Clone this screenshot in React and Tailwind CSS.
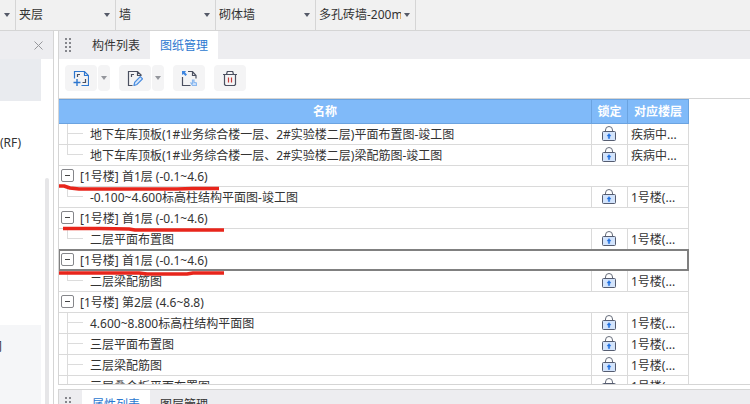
const FONT = "font-['Noto_Sans','Noto_Sans_CJK_SC',sans-serif]";

const rows = [
  { name: "地下车库顶板(1#业务综合楼一层、2#实验楼二层)平面布置图-竣工图", floor: "疾病中..." },
  { name: "地下车库顶板(1#业务综合楼一层、2#实验楼二层)梁配筋图-竣工图", floor: "疾病中...", last: true },
  { name: "[1号楼] 首1层 (-0.1~4.6)", group: true, mark: "M0 8H5L11 10L20 11H118L134 10.500H160" },
  { name: "-0.100~4.600标高柱结构平面图-竣工图", floor: "1号楼(...", last: true },
  { name: "[1号楼] 首1层 (-0.1~4.6)", group: true, mark: "M4 8.500H40L70 9L76 10H165" },
  { name: "二层平面布置图", floor: "1号楼(...", last: true },
  { name: "[1号楼] 首1层 (-0.1~4.6)", group: true, selected: true, mark: "M-1 11H80L88 12H128L134 11H165" },
  { name: "二层梁配筋图", floor: "1号楼(...", last: true },
  { name: "[1号楼] 第2层 (4.6~8.8)", group: true },
  { name: "4.600~8.800标高柱结构平面图", floor: "1号楼(..." },
  { name: "三层平面布置图", floor: "1号楼(..." },
  { name: "三层梁配筋图", floor: "1号楼(..." },
  { name: "三层叠合板平面布置图", floor: "1号楼(..." },
];

function Caret({ className }) {
  return (
    <svg viewBox="0 0 6 4" className={`h-1 w-1.5 shrink-0 ${className}`} aria-hidden="true">
      <path d="M0 0h6L3 4z" fill="currentColor" />
    </svg>
  );
}

function Picker({ label }) {
  return (
    <button className="flex h-[30px] w-[100px] shrink-0 items-center justify-between border-r border-[#d5d5d5] pr-[5px] pl-[3px]">
      <span className="overflow-hidden whitespace-nowrap">{label}</span>
      <Caret className="ml-[3px] text-[#555a68]" />
    </button>
  );
}

function Grip() {
  return (
    <svg viewBox="0 0 6 14" className="ml-1.5 h-3.5 w-1.5" fill="#85868c" aria-hidden="true">
      {[0, 4, 8, 12].map((y) => (
        <g key={y}>
          <rect x="0" y={y} width="2" height="2" />
          <rect x="4" y={y} width="2" height="2" />
        </g>
      ))}
    </svg>
  );
}

function Tabs({ items, active }) {
  return (
    <div role="tablist" className="flex h-7 items-center bg-[#ededf0]">
      <Grip />
      <div className="ml-[11px] flex h-full">
        {items.map((t) => (
          <button
            key={t}
            role="tab"
            aria-selected={t === active}
            className={t === active ? "w-[68px] bg-white pt-0.5 text-[#2b78d0]" : "w-[68px] pt-0.5"}
          >
            {t}
          </button>
        ))}
      </div>
    </div>
  );
}

function ToolButton({ label, split, children }) {
  return (
    <div className="flex gap-px">
      <button aria-label={label} className="flex h-[26px] w-8 items-center justify-center rounded-sm bg-[#f4f4f5]">
        <svg viewBox="0 0 16 16" className="h-4 w-4" fill="none" strokeWidth="1.2" aria-hidden="true">
          {children}
        </svg>
      </button>
      {split && (
        <button aria-label={`${label}选项`} className="flex h-[26px] w-3 items-center justify-center rounded-sm bg-[#f4f4f5]">
          <Caret className="text-[#94969c]" />
        </button>
      )}
    </div>
  );
}

function Toolbar() {
  return (
    <div className="flex h-[39px] items-start gap-[9px] pt-1.5 pl-1.5">
      <ToolButton label="添加图纸" split>
        <path d="M1.500 8.500v-7h10l4 4v10H8.500M11.500 1.500v4h4" stroke="#2d76cf" />
        <path d="M.5 12.500h7M4 9v7" stroke="#2d76cf" strokeWidth="1.400" />
        <path d="M4.500 7V4.500H7M12.500 9v3.500H9.500" stroke="#4b5060" />
      </ToolButton>
      <ToolButton label="编辑图纸" split>
        <path d="M5.500 15.500h-4v-14h9l4 4M10.500 1.500v4h4M4.500 7V4.500H7" stroke="#4b5060" />
        <path d="M7 15.500l.7-3.200 5.600-5.600 2.200 2.200-5.600 5.600z" stroke="#4a8de0" fill="#d9e8fb" />
      </ToolButton>
      <ToolButton label="定位图纸">
        <path d="M7 1.500h4.500l3.500 4v3M11.500 1.500v4H15M1.500 7v8.500h8" stroke="#4b5060" />
        <path d="M1 1h4L4 2.500l2 2L4.500 6l-2-2L1 5z" fill="#3f86e0" />
        <path d="M11.500 15.500L10 13l1.500.3V10h1.500v2.200l2.500.8v2.500z" stroke="#8ab8ef" fill="#cfe2fb" />
      </ToolButton>
      <ToolButton label="删除图纸">
        <path d="M1 4.500h14M4.500 4.500l.8-3h5.400l.8 3M2.500 4.500v10l1 1h9l1-1v-10" stroke="#4b5060" />
        <path d="M6.500 7.500v5M9.500 7.500v5" stroke="#c23a3a" />
      </ToolButton>
    </div>
  );
}

function Lock() {
  return (
    <svg viewBox="0 0 14 15" className="h-[15px] w-3.5" fill="none" role="img" aria-label="已锁定">
      <path d="M3.500 5V4a3.500 3.500 0 0 1 7 0v1" stroke="#666c7a" />
      <rect x=".5" y="5.500" width="13" height="9" rx="1" fill="#d3e4fc" stroke="#555c70" />
      <path d="M7 7.500l2 2.500H7.700v2.500H6.300V10H5z" fill="#1f6fe0" stroke="#1f6fe0" strokeWidth=".4" />
    </svg>
  );
}

function Branch({ last }) {
  return (
    <span className="flex w-[31px] shrink-0 self-stretch pl-2">
      <span className={last ? "h-2.5 w-4 border-b border-l border-[#dcdcdc]" : "w-4 border-l border-[#dcdcdc]"}>
        {!last && <span className="block h-2.5 border-b border-[#dcdcdc]" />}
      </span>
    </span>
  );
}

function Row({ row }) {
  const line = "border-b border-[#dadada] p-0";
  if (row.group) {
    return (
      <tr>
        <td colSpan={3} className={`relative border-r ${line}`}>
          <div className={row.selected ? "flex h-5 items-center ring-1 ring-[#808080] inset-ring-1 inset-ring-[#808080]" : "flex h-5 items-center"}>
            <button aria-label="折叠" className="mb-px ml-0.5 flex h-[13px] w-[13px] items-center justify-center rounded-[2px] border border-[#85868a] bg-white">
              <span className="h-px w-[5px] bg-[#444]" />
            </button>
            <span className="ml-1.5 pt-0.5 whitespace-nowrap">{row.name}</span>
          </div>
          {row.mark && (
            <svg viewBox="0 0 168 14" className="absolute top-3 left-0 z-10 h-3.5 w-[168px] overflow-visible" fill="none" aria-hidden="true">
              <path d={row.mark} stroke="#e8251b" strokeWidth="3.500" strokeLinejoin="round" />
            </svg>
          )}
        </td>
      </tr>
    );
  }
  return (
    <tr>
      <td className={`border-r ${line}`}>
        <div className="flex h-5 items-center overflow-hidden">
          <Branch last={row.last} />
          <span className="pt-0.5 whitespace-nowrap">{row.name}</span>
        </div>
      </td>
      <td className={`border-r ${line}`}>
        <div className="flex h-5 items-start pt-0.5 pl-2.5">
          <Lock />
        </div>
      </td>
      <td className={`border-r ${line}`}>
        <div className="flex h-5 items-center pt-0.5 pl-[3px] whitespace-nowrap">{row.floor}</div>
      </td>
    </tr>
  );
}

function DrawingTable() {
  const head = "h-[25px] border-y border-r border-[#6ba3e0] bg-[#80baf9] p-0 font-bold";
  return (
    <div className="h-[287px] overflow-hidden border-y border-[#d5d5d5]">
      <table className="w-[630px] table-fixed border-separate border-spacing-0">
        <thead>
          <tr className="text-white">
            <th className={head}>名称</th>
            <th className={`w-9 ${head}`}>锁定</th>
            <th className={`w-[61px] ${head}`}>对应楼层</th>
          </tr>
        </thead>
        <tbody>
          {rows.map((row, i) => (
            <Row key={i} row={row} />
          ))}
        </tbody>
      </table>
    </div>
  );
}

function SidePanel() {
  return (
    <aside className="flex w-[54px] shrink-0 flex-col border-r border-[#d5d5d5]">
      <div className="flex h-7 items-center justify-end bg-[#ededf0] pr-2.5">
        <button aria-label="关闭">
          <svg viewBox="0 0 9 9" className="h-[9px] w-[9px]" stroke="#96979b" aria-hidden="true">
            <path d="M.5.5l8 8M8.500.5l-8 8" />
          </svg>
        </button>
      </div>
      <div className="flex flex-1">
        <div className="flex w-[41px] flex-col">
          <div className="h-[42px] bg-[#e9ebef]" />
          <div className="mt-[34px] h-[18px]">(RF)</div>
          <div className="mt-[172px] flex-1 bg-[#f5f6f8] pt-3.5">
            <span className="-ml-2.5">间</span>
          </div>
        </div>
        <div className="mt-[119px] ml-1 w-1 rounded-t-sm bg-[#e6e6e8]" />
      </div>
    </aside>
  );
}

export default function App() {
  return (
    <div className={`flex h-screen flex-col overflow-hidden bg-white text-xs text-[#333] ${FONT}`}>
      <header className="flex h-[31px] shrink-0 overflow-hidden border-b border-[#d5d5d5] bg-[#f1f1f1]">
        <button aria-label="更多" className="flex w-4 shrink-0 items-center justify-end border-r border-[#d5d5d5] pr-[5px]">
          <Caret className="text-[#555a68]" />
        </button>
        <Picker label="夹层" />
        <Picker label="墙" />
        <Picker label="砌体墙" />
        <Picker label="多孔砖墙-200mm" />
      </header>
      <div className="flex min-h-0 flex-1">
        <SidePanel />
        <main className="ml-1 flex min-w-0 flex-1 flex-col">
          <section className="border-l border-[#d5d5d5]">
            <Tabs items={["构件列表", "图纸管理"]} active="图纸管理" />
            <Toolbar />
            <DrawingTable />
          </section>
          <section className="mt-1 border-t border-l border-[#d5d5d5]">
            <Tabs items={["属性列表", "图层管理"]} active="属性列表" />
          </section>
        </main>
      </div>
    </div>
  );
}
